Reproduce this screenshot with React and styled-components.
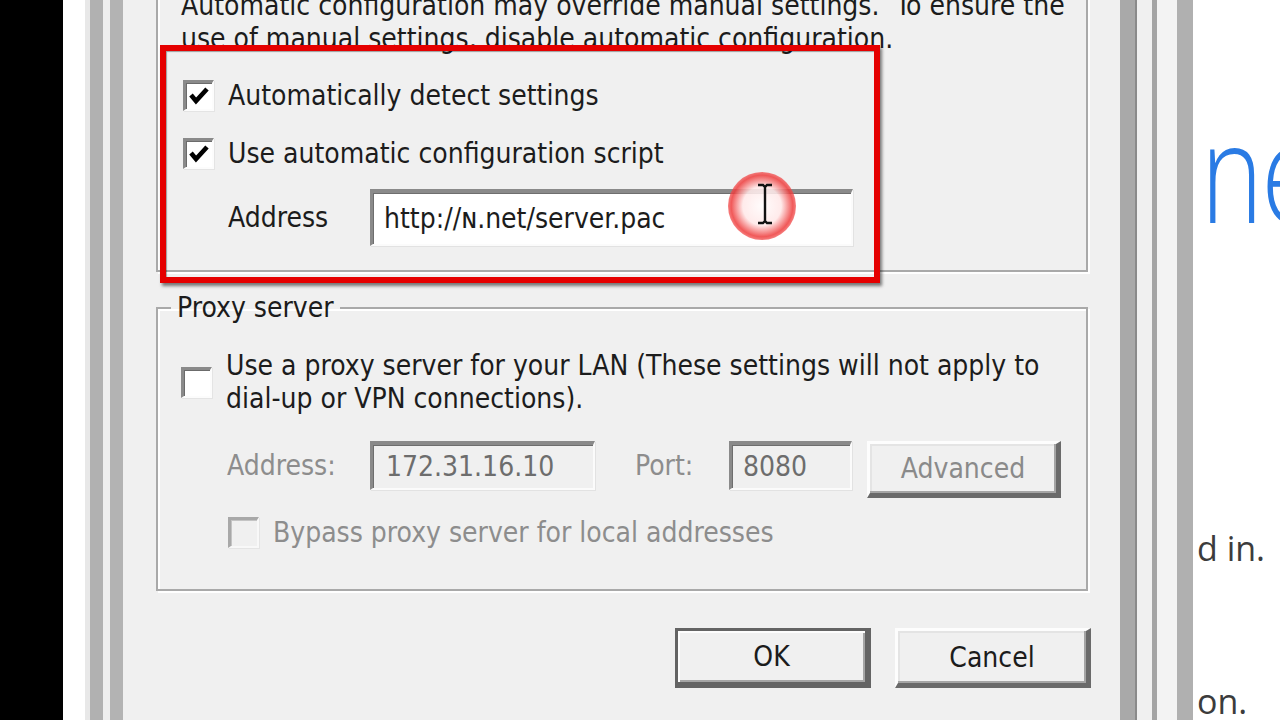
import React from 'react';
import styled, { createGlobalStyle, css } from 'styled-components';

const FONT = `"DejaVu Sans Condensed", "DejaVu Sans", Tahoma, sans-serif`;

const GlobalStyle = createGlobalStyle`
  html, body {
    margin: 0;
    padding: 0;
    background: #fff;
  }
  body {
    width: 1280px;
    height: 720px;
    overflow: hidden;
  }
`;

const Screen = styled.div`
  display: flex;
  width: 1280px;
  height: 720px;
  overflow: hidden;
  background: #fff;
`;

const Strip = styled.div`
  flex: 0 0 ${p => p.$w}px;
  background: ${p => p.$c};
  box-shadow: ${p => (p.$edge ? `inset -2px 0 0 ${p.$edge}` : 'none')};
`;

const Dialog = styled.div`
  position: relative;
  flex: 0 0 997px;
  box-sizing: border-box;
  padding: 0 32px 0 33px;
  background: #f0f0f0;
  font-family: ${FONT};
  font-size: 28px;
  line-height: 33px;
  color: #1c1c1c;
`;

const etched = css`
  border: 2px solid #a9a9a9;
  box-shadow: 2px 2px 0 #fff, inset 2px 2px 0 #fff;
`;

const TopGroup = styled.div`
  ${etched};
  border-top: none;
  padding: 0 0 24px 25px;
`;

const Intro = styled.p`
  margin: -11px 0 0 -2px;
  white-space: pre;
`;

const CheckRow = styled.div`
  display: flex;
  align-items: center;
  gap: 14px;
  min-height: 34px;
  margin-top: ${p => p.$top}px;
  margin-left: ${p => p.$indent || 0}px;
  color: ${p => (p.$disabled ? '#8d8d8d' : 'inherit')};
`;

const Box = styled.span`
  flex: 0 0 31px;
  height: 31px;
  box-sizing: border-box;
  display: flex;
  align-items: center;
  justify-content: center;
  border-style: solid;
  border-width: 3px 2px 2px 3px;
  border-color: ${p => (p.$disabled ? '#a8a8a8 #f8f8f8 #f8f8f8 #a8a8a8' : '#8a8a8a #fcfcfc #fcfcfc #8a8a8a')};
  box-shadow: inset 1px 1px 0 ${p => (p.$disabled ? '#c4c4c4' : '#6b6b6b')}, 1px 1px 0 #e4e4e4;
  background: ${p => (p.$disabled ? '#f0f0f0' : '#fff')};
`;

const CheckMark = () => (
  <svg width="22" height="20" viewBox="0 0 22 20">
    <polyline points="3,9 8,15 19,3" fill="none" stroke="#000" strokeWidth="4.6" strokeLinejoin="miter" />
  </svg>
);

const Checkbox = ({ checked, disabled }) => (
  <Box $disabled={disabled}>{checked && <CheckMark />}</Box>
);

const FieldRow = styled.div`
  display: flex;
  align-items: ${p => p.$align || 'center'};
  margin-top: ${p => p.$top}px;
  padding-left: ${p => p.$indent}px;
`;

const Label = styled.span`
  flex: 0 0 ${p => p.$w}px;
  margin-left: ${p => p.$gap || 0}px;
  align-self: center;
  color: ${p => (p.$disabled ? '#8d8d8d' : 'inherit')};
  ${p => p.$lift && css`margin-top: -8px;`}
`;

const TextBox = styled.div`
  flex: 0 0 ${p => p.$w}px;
  height: ${p => p.$h}px;
  box-sizing: border-box;
  display: flex;
  align-items: center;
  padding-left: ${p => p.$pad}px;
  border-style: solid;
  border-width: 4px 2px 2px 3px;
  border-color: #8a8a8a #fbfbfb #fbfbfb #8a8a8a;
  box-shadow: inset 1px 1px 0 #6e6e6e, 1px 1px 0 #e2e2e2;
  background: ${p => (p.$disabled ? '#f0f0f0' : '#fff')};
  color: ${p => (p.$disabled ? '#6d6d6d' : '#1c1c1c')};
  white-space: pre;
`;

const ProxyGroup = styled.fieldset`
  ${etched};
  margin: 19px 0 0 0;
  padding: 25px 0 40px 23px;
  min-width: 0;
`;

const Legend = styled.legend`
  margin-left: -10px;
  padding: 0 6px;
  color: #1c1c1c;
`;

const TwoLines = styled.div`
  white-space: pre;
`;

const Button = styled.button`
  flex: 0 0 ${p => p.$w || 196}px;
  height: ${p => p.$h || 60}px;
  margin-left: ${p => p.$gap || 0}px;
  box-sizing: border-box;
  padding: 0;
  font: inherit;
  background: #f0f0f0;
  color: ${p => (p.disabled ? '#8a8a8a' : '#1c1c1c')};
  border-style: solid;
  border-width: 3px 5px 5px 3px;
  border-color: #fdfdfd #6a6a6a #6a6a6a #fdfdfd;
  box-shadow: inset -2px -2px 0 #a5a5a5, inset 2px 2px 0 #e4e4e4;
  ${p =>
    p.$default &&
    css`
      border-width: 3px 6px 6px 3px;
      border-color: #646464;
      box-shadow: inset 2px 2px 0 #fdfdfd, inset -2px -2px 0 #a5a5a5;
    `}
`;

const ButtonBar = styled.div`
  display: flex;
  justify-content: flex-end;
  margin: 37px -3px 0 0;
`;

const Highlight = styled.div`
  position: absolute;
  left: 37px;
  top: 45px;
  width: 720px;
  height: 238px;
  box-sizing: border-box;
  border: 6px solid #e50000;
  box-shadow: 2px 3px 3px rgba(0, 0, 0, 0.5), inset 1px 1px 1px rgba(0, 0, 0, 0.35);
  pointer-events: none;
`;

const ClickRing = styled.div`
  position: absolute;
  left: 605px;
  top: 172px;
  width: 68px;
  height: 68px;
  border-radius: 50%;
  background: radial-gradient(
    circle,
    rgba(255, 252, 252, 0.92) 0%,
    rgba(255, 232, 232, 0.88) 40%,
    rgba(238, 60, 60, 0.85) 64%,
    rgba(248, 100, 100, 0.5) 80%,
    rgba(255, 150, 150, 0) 100%
  );
  pointer-events: none;
`;

const Cursor = styled.svg`
  position: absolute;
  left: 632px;
  top: 183px;
`;

const PageBehind = styled.div`
  flex: 1;
  display: flex;
  flex-direction: column;
  padding-left: 8px;
  overflow: hidden;
  background: #fff;
  font-family: "Open Sans", "Noto Sans", sans-serif;
  white-space: nowrap;
`;

const BigTitle = styled.div`
  margin-top: 94px;
  font-size: 138px;
  font-weight: 300;
  line-height: 150px;
  color: #2a7be4;
  letter-spacing: -2px;
  transform: scaleX(0.76);
  transform-origin: left center;
`;

const BodyLine = styled.div`
  margin-top: ${p => p.$top}px;
  margin-left: -4px;
  font-size: 34px;
  line-height: 40px;
  color: #3c3c3c;
`;

export default function App() {
  return (
    <>
      <GlobalStyle />
      <Screen>
        <Strip $w={63} $c="#000" />
        <Strip $w={22} $c="#fff" />
        <Strip $w={5} $c="#e8e8e8" />
        <Strip $w={13} $c="#b1b1b1" />
        <Strip $w={7} $c="#eeeeee" />
        <Strip $w={13} $c="#b3b3b3" />

        <Dialog>
          <TopGroup>
            <Intro>
              {'Automatic configuration may override manual settings.  To ensure the\nuse of manual settings, disable automatic configuration.'}
            </Intro>
            <CheckRow $top={23}>
              <Checkbox checked />
              <span>Automatically detect settings</span>
            </CheckRow>
            <CheckRow $top={24}>
              <Checkbox checked />
              <span>Use automatic configuration script</span>
            </CheckRow>
            <FieldRow $top={19} $indent={45}>
              <Label $w={142}>Address</Label>
              <TextBox $w={483} $h={57} $pad={11}>http://ɴ.net/server.pac</TextBox>
            </FieldRow>
          </TopGroup>

          <ProxyGroup>
            <Legend>Proxy server</Legend>
            <CheckRow $top={0}>
              <Checkbox />
              <TwoLines>
                {'Use a proxy server for your LAN (These settings will not apply to\ndial-up or VPN connections).'}
              </TwoLines>
            </CheckRow>
            <FieldRow $top={26} $indent={46} $align="flex-start">
              <Label $w={143} $disabled $lift>Address:</Label>
              <TextBox $w={225} $h={49} $pad={13} $disabled>172.31.16.10</TextBox>
              <Label $w={94} $gap={40} $disabled $lift>Port:</Label>
              <TextBox $w={123} $h={49} $pad={11} $disabled>8080</TextBox>
              <Button $w={194} $h={57} $gap={15} disabled>Advanced</Button>
            </FieldRow>
            <CheckRow $top={17} $indent={47} $disabled>
              <Checkbox disabled />
              <span>Bypass proxy server for local addresses</span>
            </CheckRow>
          </ProxyGroup>

          <ButtonBar>
            <Button $default>OK</Button>
            <Button $gap={24}>Cancel</Button>
          </ButtonBar>

          <Highlight />
          <ClickRing />
          <Cursor width="20" height="42" viewBox="0 0 20 42">
            <path
              d="M3 2 H8 L10 4 L12 2 H17 M10 4 V38 M3 40 H8 L10 38 L12 40 H17"
              fill="none"
              stroke="#111"
              strokeWidth="2.4"
            />
          </Cursor>
        </Dialog>

        <Strip $w={17} $c="#a9a9a9" $edge="#8a8a8a" />
        <Strip $w={15} $c="#f0f0f0" />
        <Strip $w={5} $c="#a4a4a4" />
        <Strip $w={20} $c="#f3f3f3" />
        <Strip $w={16} $c="#b0b0b0" />

        <PageBehind>
          <BigTitle>ne</BigTitle>
          <BodyLine $top={284}>d in.</BodyLine>
          <BodyLine $top={113}>on.</BodyLine>
        </PageBehind>
      </Screen>
    </>
  );
}
